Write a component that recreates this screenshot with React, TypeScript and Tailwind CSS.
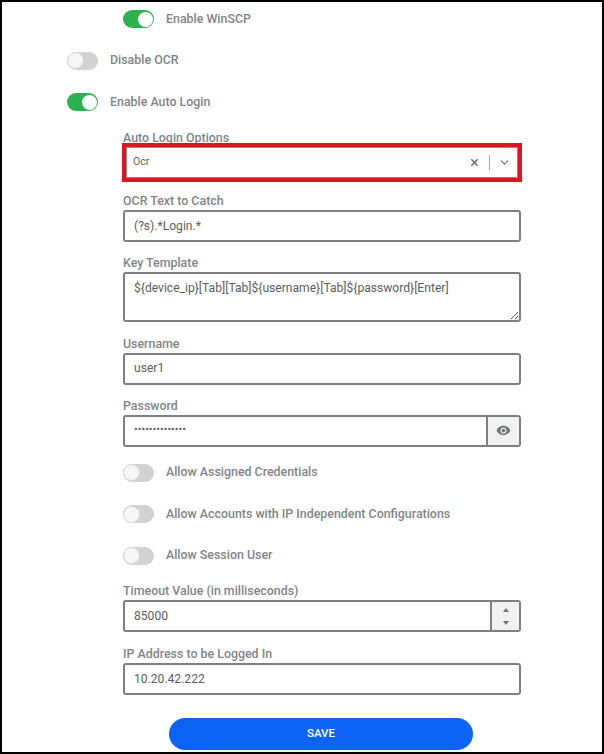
import { ChevronDown, X } from "lucide-react";

function Toggle({ on, label }: { on?: boolean; label: string }) {
  return (
    <div className="flex h-[18px] items-center gap-3">
      {on ? (
        <div className="flex h-[18px] w-[31px] items-center justify-end rounded-full bg-[#2db14f] p-[1.5px]">
          <div className="h-[15px] w-[15px] rounded-full bg-white" />
        </div>
      ) : (
        <div className="flex h-[18px] w-[31px] items-center justify-start rounded-full bg-[#d2d2d2]">
          <div className="h-[17px] w-[17px] rounded-full border border-[#d8d8d8] bg-[#f6f6f6]" />
        </div>
      )}
      <span className="text-[12.4px] leading-none font-medium text-[#80858a]">{label}</span>
    </div>
  );
}

function Label({ children }: { children: string }) {
  return <p className="mb-[3px] h-[14px] text-[12.4px] leading-[16px] font-medium text-[#80858a]">{children}</p>;
}

function TextBox({ value }: { value: string }) {
  return (
    <div className="flex h-[32px] items-center rounded-[3px] border-2 border-[#7f7f7f] bg-white px-[9px] text-[12.1px] text-[#5d5d5d]">
      {value}
    </div>
  );
}

export default function App() {
  return (
    <div className="h-[754px] w-[604px] overflow-hidden border-2 border-black bg-white font-['Roboto',sans-serif]">
      <div className="flex flex-col pt-[8px] pl-[65px]">
        <div className="ml-[56px]">
          <Toggle on label="Enable WinSCP" />
        </div>
        <div className="mt-[23.5px]">
          <Toggle label="Disable OCR" />
        </div>
        <div className="mt-[23.5px]">
          <Toggle on label="Enable Auto Login" />
        </div>

        <div className="mt-[19px] ml-[56px] flex w-[398px] flex-col">
          <p className="h-[13px] text-[12.4px] leading-[16px] font-medium text-[#80858a]">Auto Login Options</p>
          <div className="-ml-px flex h-[38.5px] w-[400px] items-center border-4 border-[#e0141f] bg-white text-[#5d5d5d]">
            <div className="flex h-full w-full items-center border-[1px] border-[#8a8a8a] pr-[6px] pl-[6px]">
              <span className="flex-1 text-[10.5px]">Ocr</span>
              <X size={11} strokeWidth={3} className="text-[#5f6368]" />
              <div className="mr-[8px] ml-[9px] h-[15px] w-px bg-[#a8a8a8]" />
              <ChevronDown size={13} strokeWidth={2} className="text-[#6b6f73]" />
            </div>
          </div>

          <div className="mt-[11.5px]">
            <Label>OCR Text to Catch</Label>
            <TextBox value="(?s).*Login.*" />
          </div>

          <div className="mt-[13px]">
            <Label>Key Template</Label>
            <div className="relative h-[50px] rounded-[3px] border-2 border-[#7f7f7f] bg-white px-[9px] pt-[7px] text-[12.1px] leading-[14px] text-[#5d5d5d]">
              {"${device_ip}[Tab][Tab]${username}[Tab]${password}[Enter]"}
              <svg className="absolute right-0 bottom-0" width="9" height="9" viewBox="0 0 9 9" fill="none" stroke="#555" strokeWidth="1">
                <path d="M1 8 L8 1 M5 8 L8 5" />
              </svg>
            </div>
          </div>

          <div className="mt-[13.5px]">
            <Label>Username</Label>
            <TextBox value="user1" />
          </div>

          <div className="mt-[13px]">
            <Label>Password</Label>
            <div className="flex h-[32px] overflow-hidden rounded-[3px] border-2 border-[#7f7f7f] bg-white">
              <div className="flex flex-1 items-center px-[9px] text-[11px] text-[#5d5d5d]">••••••••••••••</div>
              <div className="flex w-[33px] items-center justify-center border-l-2 border-[#7f7f7f] bg-[#f1f1f1]">
                <svg width="15" height="15" viewBox="0 0 24 24" fill="#6e7478">
                  <path d="M12 4.5C7 4.5 2.73 7.61 1 12c1.73 4.39 6 7.5 11 7.5s9.27-3.11 11-7.5c-1.73-4.39-6-7.5-11-7.5zM12 17c-2.76 0-5-2.24-5-5s2.24-5 5-5 5 2.24 5 5-2.24 5-5 5zm0-8c-1.66 0-3 1.34-3 3s1.34 3 3 3 3-1.34 3-3-1.34-3-3-3z" />
                </svg>
              </div>
            </div>
          </div>

          <div className="mt-[17px] flex flex-col gap-[23.5px]">
            <Toggle label="Allow Assigned Credentials" />
            <Toggle label="Allow Accounts with IP Independent Configurations" />
            <Toggle label="Allow Session User" />
          </div>

          <div className="mt-[18.5px]">
            <Label>Timeout Value (in milliseconds)</Label>
            <div className="flex h-[32px] overflow-hidden rounded-[3px] border-2 border-[#7f7f7f] bg-white">
              <div className="flex flex-1 items-center px-[9px] text-[12.1px] text-[#5d5d5d]">85000</div>
              <div className="flex w-[29px] flex-col items-center justify-center gap-[9px] border-l-2 border-[#7f7f7f] bg-[#f1f1f1]">
                <div className="h-0 w-0 border-x-[3.5px] border-b-[4px] border-x-transparent border-b-[#6e7478]" />
                <div className="h-0 w-0 border-x-[3.5px] border-t-[4px] border-x-transparent border-t-[#6e7478]" />
              </div>
            </div>
          </div>

          <div className="mt-[14px]">
            <Label>IP Address to be Logged In</Label>
            <TextBox value="10.20.42.222" />
          </div>
        </div>

        <button className="mt-[23px] ml-[102px] flex h-[32px] w-[304px] items-center justify-center rounded-full bg-[#0d63f3] text-[11.5px] font-medium text-white">
          SAVE
        </button>
      </div>
    </div>
  );
}
